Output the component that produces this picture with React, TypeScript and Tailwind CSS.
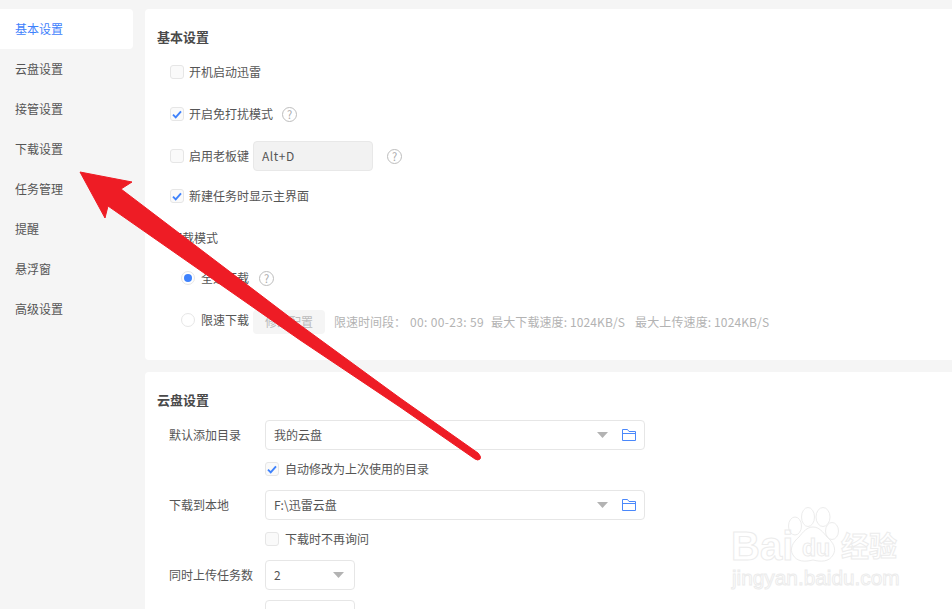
const FONT = "font-['Noto_Sans_CJK_SC','Noto_Sans',sans-serif]";

function Check({ on = false, className = "" }: { on?: boolean; className?: string }) {
  return (
    <span className={`flex h-[14px] w-[14px] shrink-0 items-center justify-center rounded-[3px] border border-[#e6e6e6] bg-[#fafafa] ${className}`}>
      {on && (
        <svg width="10" height="9" viewBox="0 0 10 9" fill="none">
          <path d="M1 4.6 L3.7 7.3 L9 1.3" stroke="#3f82fc" strokeWidth="1.9" />
        </svg>
      )}
    </span>
  );
}

function Help({ className = "" }: { className?: string }) {
  return (
    <span className={`flex h-[15px] w-[15px] shrink-0 items-center justify-center rounded-full border border-[#bdbdbd] text-[11px] leading-none text-[#aaaaaa] ${className}`}>?</span>
  );
}

function Caret() {
  return (
    <svg width="11" height="6" viewBox="0 0 11 6" className="shrink-0">
      <path d="M0 0 H11 L5.5 6 Z" fill="#b3b3b3" />
    </svg>
  );
}

function Folder() {
  return (
    <svg width="14" height="12" viewBox="0 0 14 12" fill="none" className="shrink-0">
      <path d="M0.5 11.5 V0.5 H5.5 L7 2.5 H13.5 V11.5 Z M0.5 4.5 H13.5" stroke="#4a88fb" strokeWidth="1" />
    </svg>
  );
}

function PathSelect({ value }: { value: string }) {
  return (
    <div className="flex h-[30px] w-[380px] items-center rounded-[4px] border border-[#e6e6e6] bg-white pl-2 pr-[8px] text-[12px] text-[#555555]">
      <span className="flex-1">{value}</span>
      <Caret />
      <span className="ml-[14px] flex"><Folder /></span>
    </div>
  );
}

function NumSelect({ value }: { value: string }) {
  return (
    <div className="flex h-[30px] w-[90px] items-center justify-between rounded-[4px] border border-[#e6e6e6] bg-white pl-2 pr-[10px] text-[12px] text-[#555555]">
      <span>{value}</span>
      <Caret />
    </div>
  );
}

function Row({ className = "", children }: { className?: string; children: React.ReactNode }) {
  return <div className={`flex h-[30px] items-center text-[12px] text-[#555555] ${className}`}>{children}</div>;
}

function FormRow({ label, children, className = "" }: { label: string; children: React.ReactNode; className?: string }) {
  return (
    <div className={`flex items-center text-[12px] text-[#555555] ${className}`}>
      <span className="w-[96px] shrink-0">{label}</span>
      {children}
    </div>
  );
}

const items = ["基本设置", "云盘设置", "接管设置", "下载设置", "任务管理", "提醒", "悬浮窗", "高级设置"];

export default function App() {
  return (
    <div className={`relative flex h-[609px] w-[952px] overflow-hidden bg-[#f5f5f5] pt-[9px] ${FONT}`}>
      <nav className="w-[133px] shrink-0">
        {items.map((t, i) => (
          <div
            key={t}
            className={`flex h-[40px] items-center pl-[15px] text-[12px] ${i === 0 ? "rounded-r-[4px] bg-white text-[#3f82fc]" : "text-[#555555]"}`}
          >
            {t}
          </div>
        ))}
      </nav>

      <main className="ml-[12px] flex-1">
        <section className="h-[351px] rounded-l-[4px] bg-white pl-[12px] pt-[18px]">
          <h2 className="flex h-[20px] items-center text-[13px] font-bold text-[#4a4a4a]">基本设置</h2>
          <div className="pl-[13px]">
            <Row className="mt-[10px]"><Check /><span className="ml-[5px]">开机启动迅雷</span></Row>
            <Row className="mt-[12px]"><Check on /><span className="ml-[5px]">开启免打扰模式</span><Help className="ml-[9px]" /></Row>
            <Row className="mt-[12px]">
              <Check />
              <span className="ml-[5px]">启用老板键</span>
              <span className="ml-[4px] flex h-[30px] w-[120px] items-center rounded-[4px] border border-[#e8e8e8] bg-[#f2f2f2] pl-[8px] tracking-[0.5px]">Alt+D</span>
              <Help className="ml-[14px]" />
            </Row>
            <Row className="mt-[10px]"><Check on /><span className="ml-[5px]">新建任务时显示主界面</span></Row>
            <Row className="mt-[12px]">下载模式</Row>
            <Row className="mt-[10px] pl-[11px]">
              <span className="flex h-[14px] w-[14px] items-center justify-center rounded-full border border-[#e6e6e6] bg-white">
                <span className="h-[8px] w-[8px] rounded-full bg-[#3f82fc]" />
              </span>
              <span className="ml-[6px]">全速下载</span>
              <Help className="ml-[10px]" />
            </Row>
            <Row className="mt-[12px] pl-[11px]">
              <span className="h-[14px] w-[14px] rounded-full border border-[#e6e6e6] bg-white" />
              <span className="ml-[6px]">限速下载</span>
              <span className="ml-[4px] mt-[4px] flex h-[24px] w-[72px] items-center justify-center rounded-[4px] bg-[#f5f5f5] text-[#bbbbbb]">修改配置</span>
              <span className="ml-[9px] mt-[4px] flex text-[#b3b3b3]">
                <span className="w-[76px]">限速时间段：</span>
                <span className="w-[81px] tracking-[0.35px]">00: 00-23: 59</span>
                <span className="tracking-[0.12px]">最大下载速度: 1024KB/S</span>
                <span className="ml-[10px] tracking-[0.12px]">最大上传速度: 1024KB/S</span>
              </span>
            </Row>
          </div>
        </section>

        <section className="mt-[12px] h-[300px] rounded-l-[4px] bg-white pl-[12px] pt-[18px]">
          <h2 className="flex h-[20px] items-center text-[13px] font-bold text-[#4a4a4a]">云盘设置</h2>
          <div className="pl-[12px]">
            <FormRow label="默认添加目录" className="mt-[10px]"><PathSelect value="我的云盘" /></FormRow>
            <div className="ml-[96px] mt-[10px] flex h-[18px] items-center text-[12px] text-[#555555]"><Check on /><span className="ml-[6px]">自动修改为上次使用的目录</span></div>
            <FormRow label="下载到本地" className="mt-[12px]"><PathSelect value="F:\迅雷云盘" /></FormRow>
            <div className="ml-[96px] mt-[10px] flex h-[18px] items-center text-[12px] text-[#555555]"><Check /><span className="ml-[6px]">下载时不再询问</span></div>
            <FormRow label="同时上传任务数" className="mt-[12px]"><NumSelect value="2" /></FormRow>
            <FormRow label="" className="mt-[10px]"><NumSelect value="" /></FormRow>
          </div>
        </section>
      </main>

      {/* Watermark */}
      <div className="pointer-events-none absolute left-[729px] top-[505px] h-[90px] w-[175px] font-['Liberation_Sans',sans-serif] text-transparent [-webkit-text-stroke:1px_#ececec]">
        <span className="absolute left-[2px] top-[19px] text-[40px] font-bold leading-[44px]">Bai</span>
        <svg className="absolute left-[58px] top-0" width="54" height="60" viewBox="0 0 54 60" fill="none" stroke="#ececec" strokeWidth="1">
          <ellipse cx="8" cy="21" rx="6.5" ry="9" />
          <ellipse cx="21" cy="12" rx="6.5" ry="9.5" />
          <ellipse cx="36" cy="12" rx="7" ry="9.5" />
          <ellipse cx="45" cy="26" rx="6.5" ry="8.5" />
          <path d="M26 22 C32 22 36 27 40 32 C46 37 50 44 46 50 C42 57 34 57 26 55 C18 57 10 57 6 50 C2 44 6 37 12 32 C16 27 20 22 26 22 Z" />
        </svg>
        <span className="absolute left-[73px] top-[30px] text-[23px] font-bold leading-[26px]">du</span>
        <span className="absolute left-[112px] top-[22px] font-['Noto_Sans_CJK_SC',sans-serif] text-[28px] font-bold leading-[36px]">经验</span>
        <span className="absolute left-[3px] top-[59px] text-[20.8px] leading-[28px]">jingyan.baidu.com</span>
      </div>

      {/* Annotation arrow */}
      <svg className="pointer-events-none absolute left-0 top-0" width="952" height="609" viewBox="0 0 952 609">
        <path
          d="M80 172 L132 182 L121 189 L300 325 L400 398 L478 453 Q482 457 480 459 Q478 461 475 459 L400 407 L300 340 L108 206 L105 218 Z"
          fill="#ee1c25"
          stroke="#ee1c25"
          strokeWidth="1"
          strokeLinejoin="round"
        />
      </svg>
    </div>
  );
}
